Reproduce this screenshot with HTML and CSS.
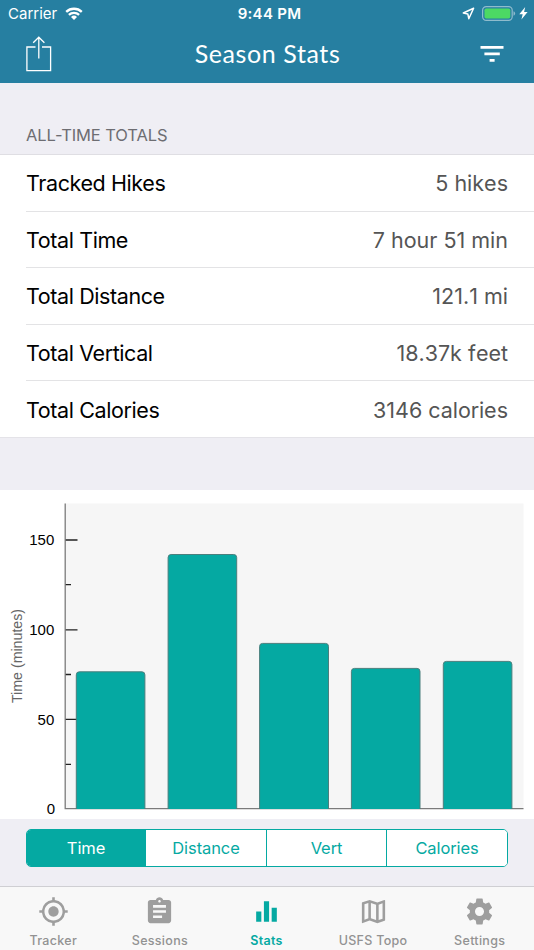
FILE: index.html
```html
<!DOCTYPE html>
<html lang="en">
<head>
    <meta charset="UTF-8">
    <meta name="viewport" content="width=device-width, initial-scale=1.0">
    <title>Season Stats</title>
    <link rel="stylesheet" href="styles.css">
</head>
<body>
    <header>
        <div class="status-bar">
            <div class="carrier">
                <span>Carrier</span>
                <svg class="wifi" viewBox="0 0 18 13" width="18" height="13">
                    <path d="M1.2 4.9a11.2 11.2 0 0 1 15.6 0M3.9 7.9a7.3 7.3 0 0 1 10.2 0" fill="none" stroke="#fff" stroke-width="2.3"/>
                    <path d="M6 9.9a4.3 4.3 0 0 1 6 0L9 13z" fill="#fff"/>
                </svg>
            </div>
            <span class="clock">9:44 PM</span>
            <div class="battery">
                <svg viewBox="0 0 13 13" width="13" height="13">
                    <path d="M11.6 1.2 1.3 6l4.5.9 1 4.8z" fill="none" stroke="#fff" stroke-width="1.5" stroke-linejoin="round"/>
                </svg>
                <svg viewBox="0 0 34 15" width="34" height="15">
                    <rect x=".6" y=".6" width="29.6" height="13.8" rx="3.6" fill="none" stroke="#8fbccd" stroke-width="1.2"/>
                    <rect x="2.5" y="2.5" width="25.8" height="10" rx="1.8" fill="#4cd964"/>
                    <path d="M31.5 5.2q1.6.5 1.6 2.3t-1.6 2.3z" fill="#8fbccd"/>
                </svg>
                <svg viewBox="0 0 9 13" width="9" height="13">
                    <path d="M6.2 0 .3 7.3h3.4L2.4 12.6l6.2-7.5H5.1z" fill="#fff"/>
                </svg>
            </div>
        </div>
        <div class="nav-bar">
            <svg viewBox="0 0 26 36" width="26" height="36">
                <path d="M9.5 11H.9v23.7h23.7V11H16M12.8 22.5V1.3M7.2 6.8l5.6-5.6 5.6 5.6" fill="none" stroke="#fff" stroke-width="1.3"/>
            </svg>
            <h1>Season Stats</h1>
            <svg viewBox="0 0 24 16" width="24" height="16">
                <path d="M.5 0h23v2.7H.5zM4.4 6.6h15.4v2.6H4.4zM9.6 13h5v2.7h-5z" fill="#fff"/>
            </svg>
        </div>
    </header>

    <main>
        <h2>ALL-TIME TOTALS</h2>
        <dl class="totals">
            <div class="row"><dt>Tracked Hikes</dt><dd>5 hikes</dd></div>
            <div class="row"><dt>Total Time</dt><dd>7 hour 51 min</dd></div>
            <div class="row"><dt>Total Distance</dt><dd>121.1 mi</dd></div>
            <div class="row"><dt>Total Vertical</dt><dd>18.37k feet</dd></div>
            <div class="row"><dt>Total Calories</dt><dd>3146 calories</dd></div>
        </dl>

        <div class="chart">
            <svg viewBox="0 0 534 329" width="534" height="329">
                <rect class="plot" x="65" y="13.5" width="458.5" height="305"/>
                <path class="ticks" d="M65 50h12.5M65 139.8h12.5M65 229.3h12.5M65 94.7h6M65 184.5h6M65 274.4h6"/>
                <path class="axis" d="M65.2 13.5v305.1h458.3"/>
                <g class="bars">
                    <path d="M76.3 319V184.8q0-3 3-3h62.6q3 0 3 3V319"/>
                    <path d="M168.1 319V67.5q0-3 3-3h62.6q3 0 3 3V319"/>
                    <path d="M259.6 319V156.4q0-3 3-3h62.9q3 0 3 3V319"/>
                    <path d="M351.4 319V181.4q0-3 3-3h62.6q3 0 3 3V319"/>
                    <path d="M443.3 319V174.4q0-3 3-3h62.6q3 0 3 3V319"/>
                </g>
                <g class="labels">
                    <text x="54.3" y="55.3">150</text>
                    <text x="54.3" y="145">100</text>
                    <text x="54.3" y="234.7">50</text>
                    <text x="55" y="324.4">0</text>
                </g>
                <text class="axis-title" transform="translate(22.3 166) rotate(-90)">Time (minutes)</text>
            </svg>
        </div>

        <div class="segments" role="group">
            <button class="segment active">Time</button>
            <button class="segment">Distance</button>
            <button class="segment">Vert</button>
            <button class="segment">Calories</button>
        </div>
    </main>

    <nav class="tabs">
        <a class="tab">
            <svg viewBox="0 0 24 24"><path d="M12 8c-2.21 0-4 1.79-4 4s1.79 4 4 4 4-1.79 4-4-1.79-4-4-4zm8.94 3A8.994 8.994 0 0 0 13 3.06V1h-2v2.06A8.994 8.994 0 0 0 3.06 11H1v2h2.06A8.994 8.994 0 0 0 11 20.94V23h2v-2.06A8.994 8.994 0 0 0 20.94 13H23v-2h-2.06zM12 19c-3.87 0-7-3.13-7-7s3.13-7 7-7 7 3.13 7 7-3.13 7-7 7z"/></svg>
            <span>Tracker</span>
        </a>
        <a class="tab">
            <svg viewBox="0 0 24 24"><path d="M19 3h-4.18C14.4 1.84 13.3 1 12 1c-1.3 0-2.4.84-2.82 2H5c-1.1 0-2 .9-2 2v14c0 1.1.9 2 2 2h14c1.1 0 2-.9 2-2V5c0-1.1-.9-2-2-2zm-7 0c.55 0 1 .45 1 1s-.45 1-1 1-1-.45-1-1 .45-1 1-1zm2 14H7v-2h7v2zm3-4H7v-2h10v2zm0-4H7V7h10v2z"/></svg>
            <span>Sessions</span>
        </a>
        <a class="tab active">
            <svg viewBox="0 0 24 24"><path d="M10 20h4V4h-4v16zm-6 0h4v-8H4v8zM16 9v11h4V9h-4z"/></svg>
            <span>Stats</span>
        </a>
        <a class="tab">
            <svg viewBox="0 0 24 24"><path d="M20.5 3l-.16.03L15 5.1 9 3 3.36 4.9c-.21.07-.36.25-.36.48V20.5c0 .28.22.5.5.5l.16-.03L9 18.9l6 2.1 5.64-1.9c.21-.07.36-.25.36-.48V3.5c0-.28-.22-.5-.5-.5zM10 5.47l4 1.4v11.66l-4-1.4V5.47zm-5 .99l3-1.01v11.7l-3 1.16V6.46zm14 11.08l-3 1.01V6.86l3-1.16v11.84z"/></svg>
            <span>USFS Topo</span>
        </a>
        <a class="tab">
            <svg viewBox="0 0 24 24"><path d="M19.43 12.98c.04-.32.07-.64.07-.98s-.03-.66-.07-.98l2.11-1.65c.19-.15.24-.42.12-.64l-2-3.46c-.12-.22-.39-.3-.61-.22l-2.49 1c-.52-.4-1.08-.73-1.69-.98l-.38-2.65A.488.488 0 0 0 14 2h-4c-.25 0-.46.18-.49.42l-.38 2.65c-.61.25-1.17.59-1.69.98l-2.49-1c-.23-.09-.49 0-.61.22l-2 3.46c-.13.22-.07.49.12.64l2.11 1.65c-.04.32-.07.65-.07.98s.03.66.07.98l-2.11 1.65c-.19.15-.24.42-.12.64l2 3.46c.12.22.39.3.61.22l2.49-1c.52.4 1.08.73 1.69.98l.38 2.65c.03.24.24.42.49.42h4c.25 0 .46-.18.49-.42l.38-2.65c.61-.25 1.17-.59 1.69-.98l2.49 1c.23.09.49 0 .61-.22l2-3.46c.12-.22.07-.49-.12-.64l-2.11-1.65zM12 15.5c-1.93 0-3.5-1.57-3.5-3.5s1.57-3.5 3.5-3.5 3.5 1.57 3.5 3.5-1.57 3.5-3.5 3.5z"/></svg>
            <span>Settings</span>
        </a>
    </nav>
</body>
</html>
```
FILE: styles.css
```css
html {
    font-family: Inter, "Liberation Sans", sans-serif;
    background-color: #efeef4;
    color: #000000;
}
body {
    margin: 0;
    height: 950px;
    display: flex;
    flex-direction: column;
    overflow: hidden;
}

header {
    height: 83px;
    background-color: #267fa1;
    color: #ffffff;
}
.status-bar {
    display: grid;
    grid-template-columns: 1fr auto 1fr;
    align-items: center;
    height: 27px;
    padding: 0 6px 0 8px;
    font-size: 15px;
}
.carrier, .battery {
    display: flex;
    align-items: center;
}
.carrier {
    gap: 8px;
}
.battery {
    justify-content: flex-end;
    gap: 7px;
}
.battery svg:last-child {
    margin-left: -4px;
}
.clock {
    padding-left: 3px;
    font-weight: 600;
    letter-spacing: 0.3px;
}
.nav-bar {
    display: flex;
    justify-content: space-between;
    align-items: center;
    height: 54px;
    padding: 0 30px 0 26px;
}
h1 {
    margin: -2px 0 0 3px;
    font-family: Lato, sans-serif;
    font-size: 25px;
    font-weight: 400;
    letter-spacing: 0.6px;
}

main {
    flex: 1;
}
h2 {
    box-sizing: border-box;
    height: 71px;
    margin: 0;
    padding: 42px 26px 0;
    font-size: 16.5px;
    line-height: 20px;
    font-weight: 400;
    letter-spacing: -0.1px;
    color: #6d6d72;
}

.totals {
    margin: 0 0 52px;
    padding-left: 26px;
    background-color: #ffffff;
    border-top: 1px solid #dfdee3;
    border-bottom: 1px solid #e4e3e8;
}
.row {
    box-sizing: border-box;
    display: flex;
    justify-content: space-between;
    align-items: center;
    height: 56.6px;
    padding: 0.9px 26px 0 0;
    border-bottom: 1px solid #e3e3e5;
    font-size: 21.5px;
    letter-spacing: -0.4px;
}
.row:last-child {
    height: 55.6px;
    border-bottom: none;
}
.row dd {
    margin: 0;
    color: #555555;
    font-kerning: none;
    letter-spacing: 0;
}

.chart {
    height: 329px;
    background-color: #ffffff;
}
.chart svg {
    display: block;
    font-family: "Liberation Sans", Arial, sans-serif;
    font-size: 15px;
}
.plot {
    fill: #f6f6f6;
}
.axis {
    fill: none;
    stroke: #7b7b7b;
    stroke-width: 1.3;
}
.ticks {
    stroke: #222222;
    stroke-width: 1.3;
}
.bars {
    fill: #05a9a2;
    stroke: #4b7f7d;
    stroke-width: 1;
}
.labels {
    text-anchor: end;
}
.axis-title {
    fill: #666666;
    text-anchor: middle;
    font-size: 14.2px;
}

.segments {
    box-sizing: border-box;
    display: grid;
    grid-template-columns: 118px 121px 120px 1fr;
    height: 38px;
    margin: 10px 26px 0;
    border: 1px solid #05a9a2;
    border-radius: 5px;
    background-color: #ffffff;
    overflow: hidden;
}
.segment {
    padding: 0;
    border: none;
    border-left: 1px solid #05a9a2;
    background-color: #ffffff;
    color: #05a9a2;
    font-family: inherit;
    font-size: 16.5px;
    letter-spacing: -0.1px;
}
.segment:first-child {
    border-left: none;
}
.segment.active {
    background-color: #05a9a2;
    color: #ffffff;
}

.tabs {
    box-sizing: border-box;
    display: flex;
    height: 64px;
    padding-right: 1px;
    background-color: #f8f8f8;
    border-top: 1px solid #cfcfd3;
}
.tab {
    flex: 1 1 0;
    display: flex;
    flex-direction: column;
    align-items: center;
    padding-top: 9px;
    color: #929292;
    font-size: 12.5px;
    font-weight: 500;
    line-height: 16px;
    letter-spacing: 0.3px;
}
.tab svg {
    width: 31px;
    height: 31px;
    margin-bottom: 6px;
    fill: #9e9e9e;
}
.tab.active {
    color: #05a9a2;
    font-weight: 600;
}
.tab.active svg {
    fill: #05a9a2;
}
```
